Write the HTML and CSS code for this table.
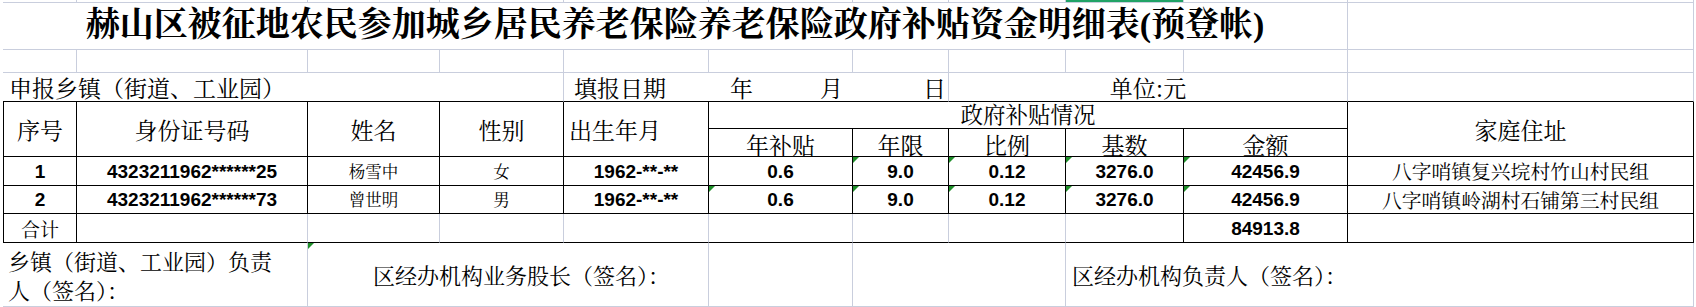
FILE: index.html
```html
<!DOCTYPE html>
<html lang="zh-CN">
<head>
<meta charset="utf-8">
<title>补贴资金明细表</title>
<link rel="stylesheet" href="styles.css">
</head>
<body>
<div class="sheet">
  <!-- row 0: cut-off top row -->
  <div class="c"></div><div class="c"></div><div class="c"></div><div class="c"></div><div class="c"></div><div class="c"></div><div class="c"></div><div class="c"></div><div class="c sel"></div><div class="c"></div><div class="c"></div>

  <!-- title -->
  <div class="c s10 title">赫山区被征地农民参加城乡居民养老保险养老保险政府补贴资金明细表(预登帐)</div>
  <div class="c"></div>

  <!-- empty row -->
  <div class="c"></div><div class="c"></div><div class="c"></div><div class="c"></div><div class="c"></div><div class="c"></div><div class="c"></div><div class="c"></div><div class="c"></div><div class="c"></div><div class="c"></div>

  <!-- info row -->
  <div class="c s4 kb left hd pad-info">申报乡镇（街道、工业园）</div>
  <div class="c s3 kb hd date"><span>填报日期</span><span>年</span><span>月</span><span>日</span></div>
  <div class="c s3 kb hd">单位:元</div>
  <div class="c kb"></div>

  <!-- header -->
  <div class="c k kl r2 hd">序号</div>
  <div class="c k r2 hd">身份证号码</div>
  <div class="c k r2 hd">姓名</div>
  <div class="c k r2 hd">性别</div>
  <div class="c k r2 hd left pad-birth">出生年月</div>
  <div class="c k s5 hd group">政府补贴情况</div>
  <div class="c k r2 hd">家庭住址</div>
  <div class="c k hd sub">年补贴</div>
  <div class="c k hd sub">年限</div>
  <div class="c k hd sub">比例</div>
  <div class="c k hd sub">基数</div>
  <div class="c k hd sub">金额</div>

  <!-- data row 1 -->
  <div class="c k kl num">1</div>
  <div class="c k num">4323211962******25</div>
  <div class="c k name">杨雪中</div>
  <div class="c k name">女</div>
  <div class="c k num">1962-**-**</div>
  <div class="c k num">0.6</div>
  <div class="c k num flag">9.0</div>
  <div class="c k num flag">0.12</div>
  <div class="c k num flag">3276.0</div>
  <div class="c k num flag">42456.9</div>
  <div class="c k addr">八字哨镇复兴垸村竹山村民组</div>

  <!-- data row 2 -->
  <div class="c k kl num">2</div>
  <div class="c k num">4323211962******73</div>
  <div class="c k name">曾世明</div>
  <div class="c k name">男</div>
  <div class="c k num">1962-**-**</div>
  <div class="c k num flag">0.6</div>
  <div class="c k num flag">9.0</div>
  <div class="c k num flag">0.12</div>
  <div class="c k num flag">3276.0</div>
  <div class="c k num flag">42456.9</div>
  <div class="c k addr">八字哨镇岭湖村石铺第三村民组</div>

  <!-- total row -->
  <div class="c k kl total">合计</div>
  <div class="c kb"></div>
  <div class="c kb"></div>
  <div class="c kb"></div>
  <div class="c kb"></div>
  <div class="c kb"></div>
  <div class="c kb"></div>
  <div class="c kb"></div>
  <div class="c k"></div>
  <div class="c k num">84913.8</div>
  <div class="c k"></div>

  <!-- signature row -->
  <div class="c s2 left sig pad-sig1">乡镇（街道、工业园）负责<br>人（签名）：</div>
  <div class="c s3 left sig pad-sig2 flag">区经办机构业务股长（签名）：</div>
  <div class="c"></div>
  <div class="c s2"></div>
  <div class="c s3 left sig pad-sig3">区经办机构负责人（签名）：</div>
</div>
</body>
</html>
```

FILE: styles.css
```css
:root {
  --grid: #c9cedd;
  --ink: #000;
  --cjk: "Noto Serif CJK SC", "Noto Sans CJK SC", sans-serif;
}

* { box-sizing: border-box; }

html, body {
  margin: 0;
  padding: 0;
  background: #fff;
  overflow: hidden;
}

.sheet {
  display: grid;
  grid-template-columns: 74px 231px 132px 124px 145px 144px 96px 117px 118px 164px 346px;
  grid-template-rows: 3px 47px 23px 29px 27px 28px 29px 28px 29px 64px;
  padding-left: 3px;
  width: 1696px;
  height: 307px;
  color: var(--ink);
  font-family: var(--cjk);
}

.c {
  border-right: 1px solid var(--grid);
  border-bottom: 1px solid var(--grid);
  display: flex;
  align-items: center;
  justify-content: center;
  white-space: nowrap;
  min-width: 0;
  position: relative;
}

.sel {
  background: linear-gradient(#21a366 0 2px, transparent 2px);
}

.s2 { grid-column: span 2; }
.s3 { grid-column: span 3; }
.s4 { grid-column: span 4; }
.s5 { grid-column: span 5; }
.s10 { grid-column: span 10; }
.r2 { grid-row: span 2; }

.k { border-right-color: var(--ink); border-bottom-color: var(--ink); }
.kb { border-bottom-color: var(--ink); }
.kl { border-left: 1px solid var(--ink); }

.left { justify-content: flex-start; }

.title {
  font-family: "Liberation Serif", "Noto Serif CJK SC", "Noto Sans CJK SC", serif;
  font-weight: 700;
  font-size: 34px;
  line-height: 1;
  padding-bottom: 3px;
}

.hd {
  font-size: 23px;
  line-height: 1;
}

.group { padding-bottom: 3px; font-size: 22.5px; }
.sub { padding-top: 3px; }

.pad-info { padding-left: 6px; }
.pad-birth { padding-left: 5px; }

.date {
  display: grid;
  grid-template-columns: 156px 90px 103px auto;
  justify-content: start;
  align-items: center;
  padding-left: 10px;
}

.num {
  font-family: "Liberation Sans", Arial, sans-serif;
  font-weight: 700;
  font-size: 19px;
  line-height: 1;
}

.name {
  font-size: 16.5px;
  line-height: 1;
}

.addr {
  font-size: 19.8px;
  line-height: 1;
}

.total {
  font-size: 19px;
  line-height: 1;
}

.sig {
  font-size: 22px;
  line-height: 29px;
  white-space: nowrap;
}

.pad-sig1 { padding-left: 5px; }
.pad-sig2 { padding-left: 65px; }
.pad-sig3 { padding-left: 6px; }

.flag::before {
  content: "";
  position: absolute;
  top: 0;
  left: 0;
  border-top: 6px solid #1f8f2a;
  border-right: 6px solid transparent;
}
```
